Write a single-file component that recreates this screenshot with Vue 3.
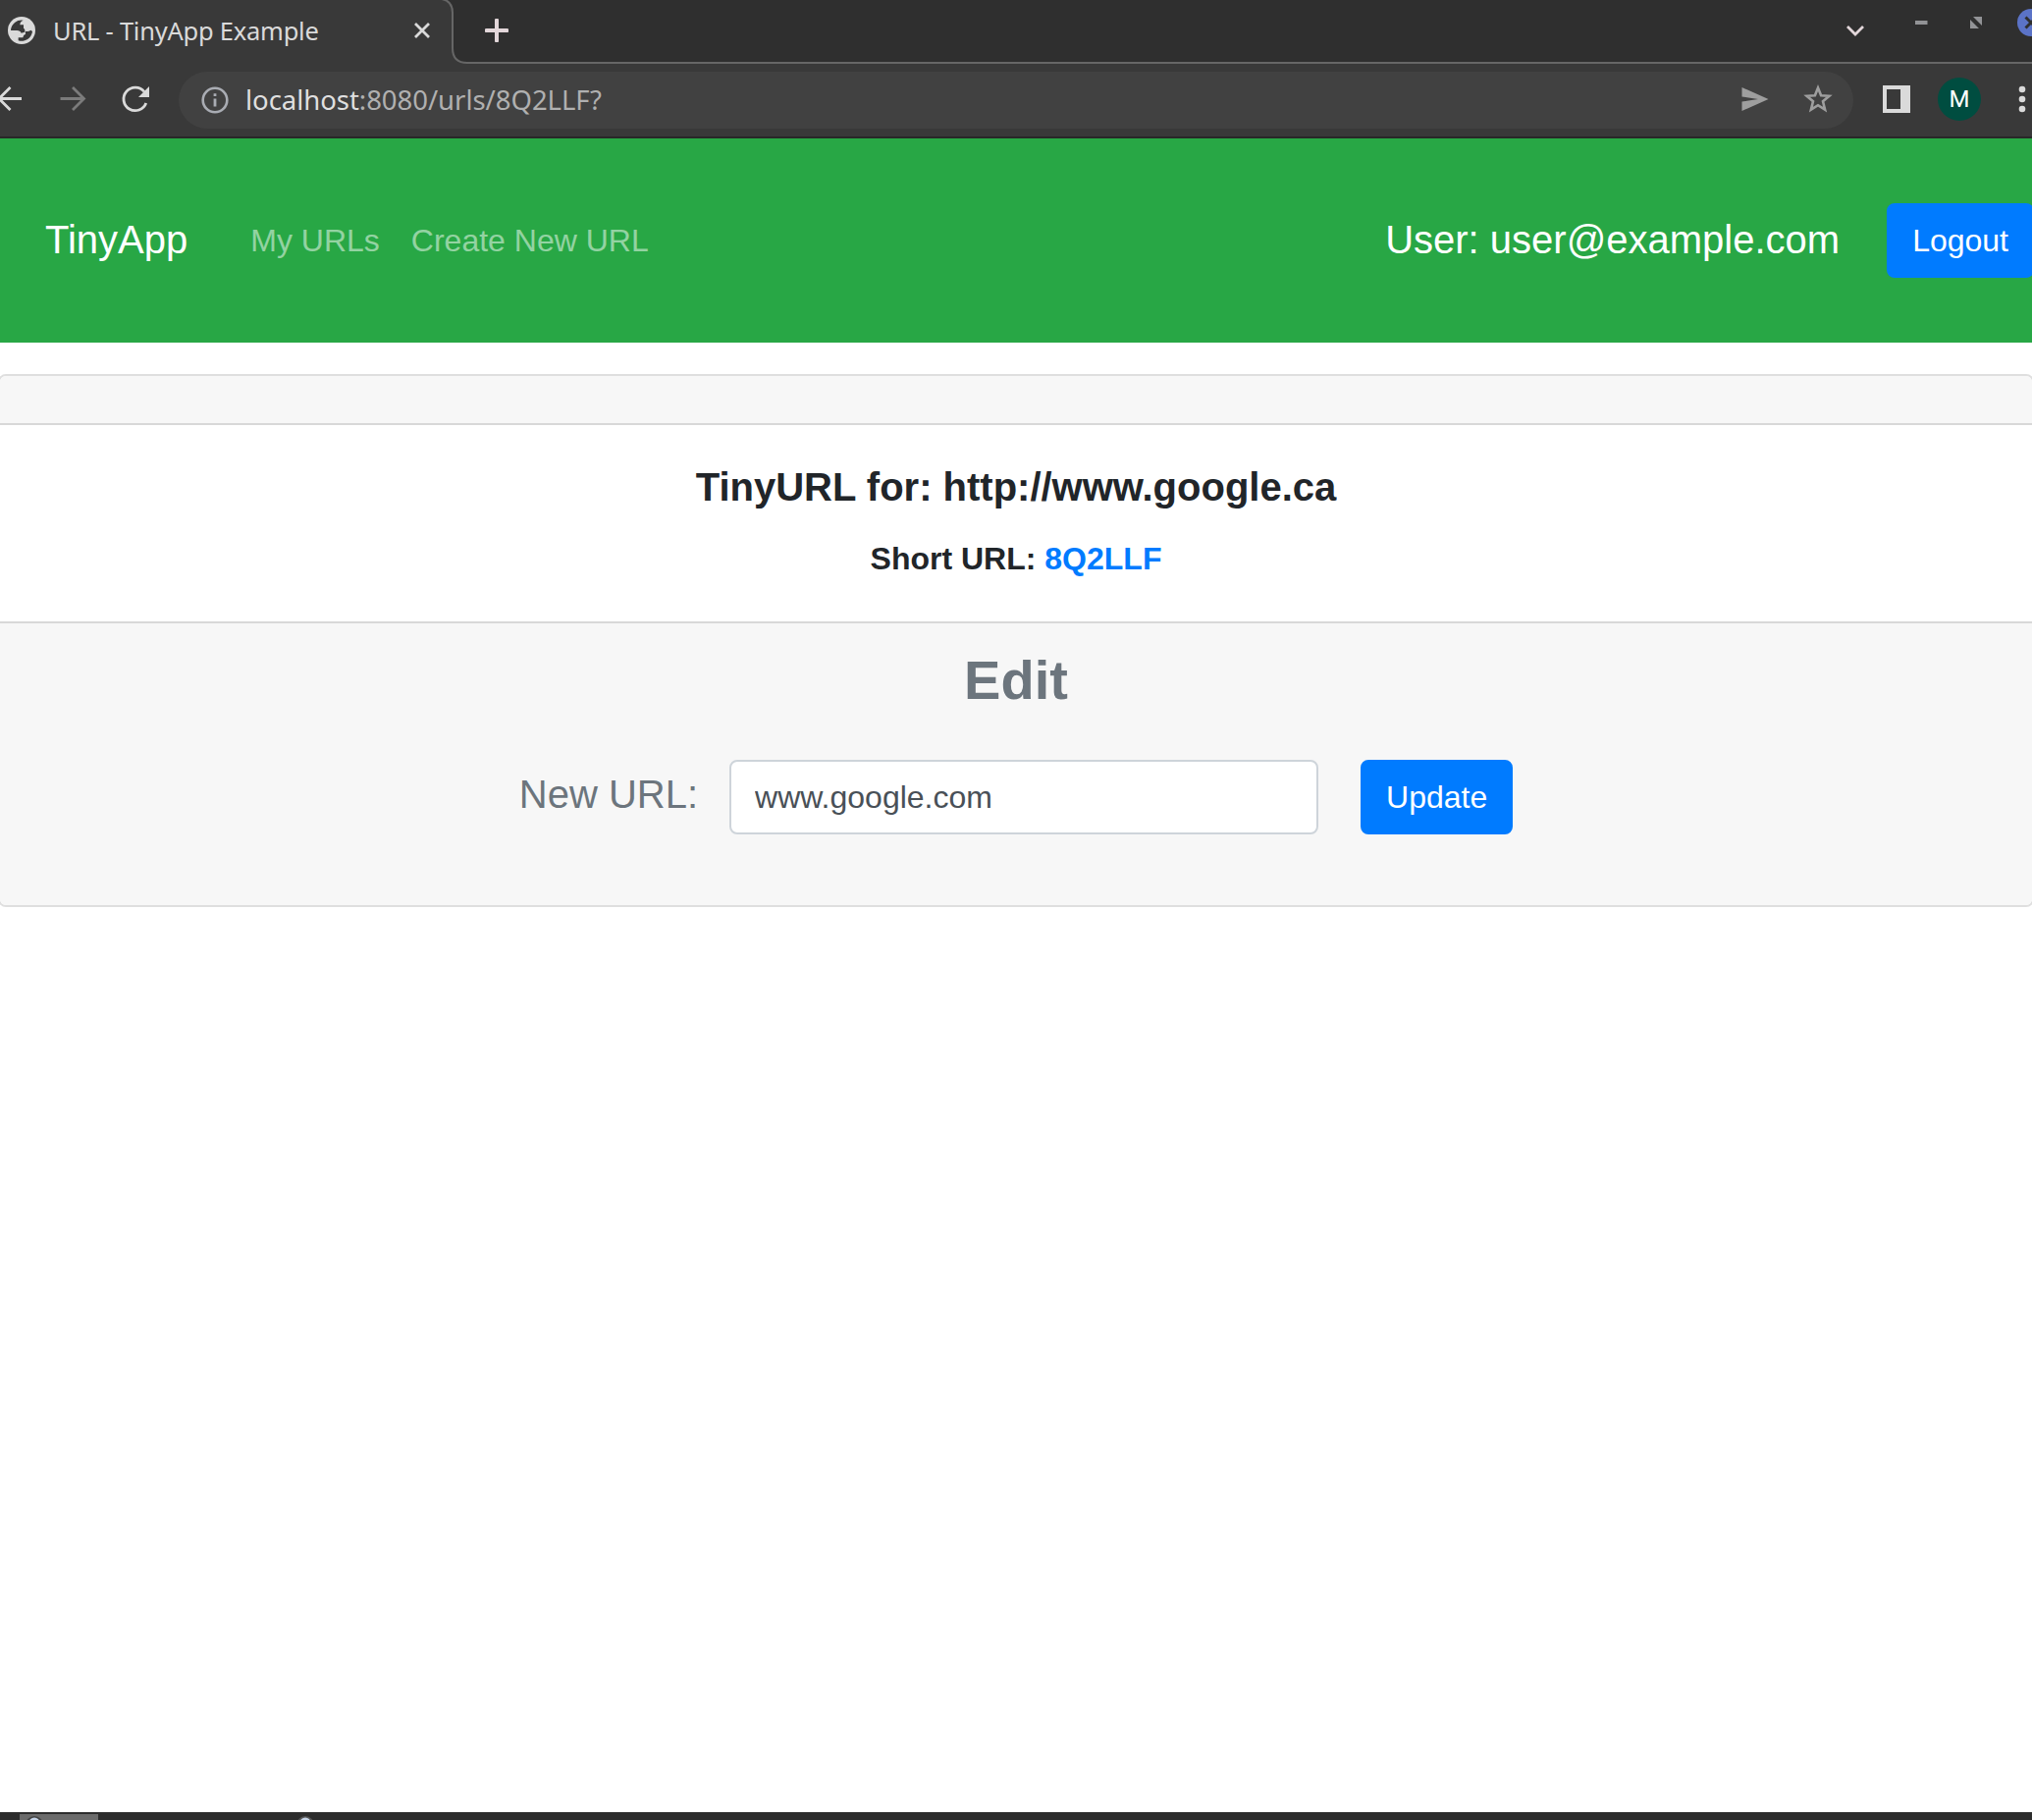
<script setup>
import { ref } from 'vue'

const newUrl = ref('www.google.com')
const navLinks = ['My URLs', 'Create New URL']
</script>

<template>
  <div class="screen">
    <div class="tabstrip">
      <svg class="tab-shape" width="2070" height="65" viewBox="0 0 2070 65" aria-hidden="true">
        <path d="M0 0H450Q461 1 461 13V49Q461 64 476 64H2070V65H0Z" fill="#393939" />
        <path d="M450 -1Q461 1 461 13V49Q461 64 476 64H2070" fill="none" stroke="#666" stroke-width="2" />
      </svg>
      <div class="tab">
        <svg class="globe" width="28" height="28" viewBox="12 12 84 84">
          <circle cx="54" cy="54" r="42" fill="#dadada" />
          <path d="M21 54A33 33 0 0 1 59 23Q49 26 49 37H60V47Q66 50 63 59L53 62Q50 54 40 54Z" fill="#393939" />
          <path d="M87 57A33 33 0 0 1 44 85V76H58Q59 67 66 65L65 56Q75 59 82 53Z" fill="#393939" />
        </svg>
        <span class="tab-title">URL - TinyApp Example</span>
        <svg class="tab-close" width="18" height="18" viewBox="0 0 18 18">
          <path d="M2 2L16 16M16 2L2 16" stroke="#dadada" stroke-width="2.8" />
        </svg>
      </div>
      <svg class="new-tab" width="24" height="24" viewBox="0 0 24 24">
        <path d="M12 1.5V22.5M1.5 12H22.5" stroke="#e3d7da" stroke-width="4" stroke-linecap="round" />
      </svg>
      <svg class="window-controls" width="200" height="63" viewBox="1870 0 200 63">
        <path d="M1882 27L1890 35L1898 27" fill="none" stroke="#e3d7da" stroke-width="2.8" />
        <rect x="1951" y="21" width="12.5" height="4" fill="#929396" />
        <path d="M2010 17H2019V26Z M2007 20V29H2016Z" fill="#929396" />
        <circle cx="2069" cy="23" r="14" fill="#5b73c7" />
        <path d="M2063.5 17.5L2074.5 28.5M2063.5 28.5L2074.5 17.5" stroke="#2f2f2f" stroke-width="3" />
      </svg>
    </div>

    <div class="toolbar">
      <svg class="nav-icons" width="182" height="58" viewBox="0 73 182 58" fill="none">
        <path d="M22 100.500H-1M10.500 89L-1 100.500L10.500 112" stroke="#dadada" stroke-width="2.8" />
        <path d="M61.500 100.500H86M74 89L85.500 100.500L74 112" stroke="#7b7b7b" stroke-width="2.8" />
        <path d="M148.800 105A11.800 11.800 0 1 1 147 93.500" stroke="#dadada" stroke-width="2.800" />
        <path d="M152 88V99H141Z" fill="#dadada" />
      </svg>
      <div class="omnibox">
        <svg class="info" width="28" height="28" viewBox="0 0 28 28">
          <circle cx="14" cy="14" r="12.3" fill="none" stroke="#a9acb3" stroke-width="2.6" />
          <path d="M12.600 7.300H15.400V10.100H12.600ZM12.600 12.500H15.400V20.500H12.600Z" fill="#a9acb3" />
        </svg>
        <span class="address"><span class="host">localhost</span>:8080/urls/8Q2LLF?</span>
        <svg class="send" width="28" height="26" viewBox="0 0 28 26">
          <path d="M0.500 1V10.500L17 13L0.500 15.500V25L27.500 13Z" fill="#9e9e9e" />
        </svg>
        <svg class="star" width="30" height="30" viewBox="0 0 30 30">
          <path d="M15 3.500L18.100 11.300L26.400 11.800L20 17.200L22.100 25.600L15 21.200L7.900 25.600L10 17.200L3.600 11.800L11.900 11.300Z" fill="none" stroke="#9e9e9e" stroke-width="2.600" />
        </svg>
      </div>
      <svg class="side-panel" width="28" height="28" viewBox="0 0 28 28">
        <path d="M0 0H28V28H0ZM4 4V24H18V4Z" fill="#dadada" fill-rule="evenodd" />
      </svg>
      <span class="avatar">M</span>
      <svg class="kebab" width="8" height="28" viewBox="0 0 8 28" fill="#dadada">
        <circle cx="4" cy="4" r="3.300" /><circle cx="4" cy="14" r="3.300" /><circle cx="4" cy="24" r="3.300" />
      </svg>
    </div>

    <nav class="navbar">
      <span class="brand">TinyApp</span>
      <a v-for="link in navLinks" :key="link" class="nav-link">{{ link }}</a>
      <span class="user">User: user@example.com</span>
      <button class="btn logout">Logout</button>
    </nav>

    <main class="card">
      <div class="card-header"></div>
      <div class="card-body">
        <h5>TinyURL for: http://www.google.ca</h5>
        <p>Short URL: <a>8Q2LLF</a></p>
      </div>
      <div class="card-footer">
        <h3>Edit</h3>
        <form class="edit-form" @submit.prevent>
          <label for="new-url">New URL:</label>
          <input id="new-url" v-model="newUrl" type="text" />
          <button class="btn update">Update</button>
        </form>
      </div>
    </main>

    <div class="taskbar">
      <svg width="340" height="8" viewBox="0 0 340 8">
        <rect x="20" y="2" width="80" height="6" fill="#6b6b6b" />
        <circle cx="35" cy="13" r="9" fill="#444" />
        <circle cx="35" cy="11" r="5.500" fill="#c5d3e6" />
        <circle cx="311" cy="13" r="9" fill="#555" />
        <circle cx="311" cy="11" r="5.500" fill="#c5d3e6" />
      </svg>
    </div>
  </div>
</template>

<style>
html,
body {
  margin: 0;
  overflow: hidden;
}
</style>

<style scoped>
.screen {
  width: 2070px;
  height: 1854px;
  overflow: hidden;
  display: flex;
  flex-direction: column;
  background: #fff;
  color: #212529;
  font: 32px/1.5 "Liberation Sans", Arial, sans-serif;
}
.screen * {
  box-sizing: border-box;
}
svg {
  display: block;
  flex: none;
}
.tabstrip {
  position: relative;
  height: 65px;
  flex: none;
  display: flex;
  background: #2f2f2f;
}
.tab-shape {
  position: absolute;
  inset: 0;
}
.tab {
  position: relative;
  width: 462px;
  height: 62px;
  display: flex;
  align-items: center;
  padding: 0 23px 0 8px;
}
.tab-title {
  margin-left: 18px;
  color: #dadada;
  font: 25.5px/36px "Noto Sans", sans-serif;
  letter-spacing: -0.24px;
  white-space: nowrap;
}
.tab-close {
  margin-left: auto;
}
.new-tab {
  position: relative;
  margin: 19px 0 0 32px;
}
.window-controls {
  position: relative;
  margin-left: auto;
}
.toolbar {
  height: 76px;
  flex: none;
  display: flex;
  align-items: center;
  background: #393939;
  border-bottom: 2px solid #282828;
}
.omnibox {
  width: 1706px;
  height: 58px;
  flex: none;
  display: flex;
  align-items: center;
  padding: 0 21px 0 23px;
  border-radius: 29px;
  background: #414141;
}
.info {
  margin-bottom: 1px;
}
.address {
  margin-left: 17px;
  color: #b0b0b0;
  font: 27.5px/38px "Noto Sans", sans-serif;
  letter-spacing: -0.04px;
  white-space: nowrap;
}
.host {
  color: #dfdfdf;
}
.send {
  margin: 0 0 2px auto;
}
.star {
  margin: 0 0 2px 35px;
}
.side-panel {
  margin: 0 0 2px 30px;
}
.avatar {
  width: 44px;
  height: 44px;
  margin: 0 0 2px 28px;
  flex: none;
  border-radius: 50%;
  background: #004d40;
  color: #fff;
  text-align: center;
  font: 24px/45px Roboto, sans-serif;
}
.kebab {
  margin: 0 0 2px 38px;
}
.navbar {
  height: 208px;
  flex: none;
  display: flex;
  align-items: center;
  padding-left: 46px;
  background: #28a745;
  color: #fff;
  white-space: nowrap;
}
.brand,
.user {
  margin-bottom: 2px;
  font-size: 40px;
  line-height: 60px;
}
.brand {
  margin-right: 48px;
}
.nav-link {
  padding: 0 16px;
  color: rgba(255, 255, 255, 0.5);
}
.user {
  margin-left: auto;
  margin-right: 48px;
}
.btn {
  height: 76px;
  flex: none;
  padding: 12px 24px;
  border: 2px solid #007bff;
  border-radius: 8px;
  background: #007bff;
  color: #fff;
  font: inherit;
}
.logout {
  margin-right: -2px;
}
.card {
  flex: none;
  margin: 32px -2px 0;
  border: 2px solid #dfdfdf;
  border-radius: 8px;
  overflow: hidden;
  text-align: center;
}
.card-header {
  height: 50px;
  background: #f7f7f7;
  border-bottom: 2px solid #d8d8d8;
}
.card-body {
  height: 200px;
  padding: 39px 40px 40px;
  font-weight: 700;
}
h5 {
  margin: 0 0 25px;
  font-size: 40px;
  line-height: 48px;
}
p {
  margin: 0;
}
p a {
  color: #007bff;
}
.card-footer {
  height: 289px;
  padding: 24px 40px;
  border-top: 2px solid #d8d8d8;
  background: #f7f7f7;
  color: #6c757d;
}
h3 {
  margin: 0 0 48px;
  font-size: 56px;
  line-height: 67px;
}
.edit-form {
  display: flex;
  align-items: center;
  justify-content: center;
}
label {
  margin: 0 32px 6px 0;
  font-size: 40px;
  line-height: 60px;
}
input {
  width: 600px;
  height: 76px;
  padding: 12px 24px;
  border: 2px solid #ced4da;
  border-radius: 8px;
  background: #fff;
  color: #495057;
  font: inherit;
}
.update {
  margin-left: 43px;
}
.taskbar {
  height: 8px;
  flex: none;
  margin-top: auto;
  overflow: hidden;
  background: #2d2d2d;
}
</style>
